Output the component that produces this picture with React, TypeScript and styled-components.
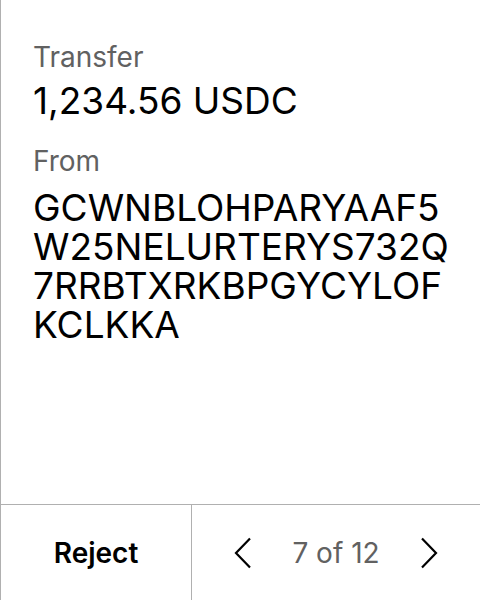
import React from "react";
import styled, { createGlobalStyle } from "styled-components";

const Global = createGlobalStyle`
  html, body { margin: 0; padding: 0; background: #fff; }
  body { font-family: Inter, "Noto Sans", sans-serif; }
  * { box-sizing: border-box; }
`;

const Screen = styled.div`
  width: 480px;
  height: 600px;
  display: flex;
  flex-direction: column;
  border-left: 1px solid #b0b0b0;
  background: #fff;
`;

const Content = styled.div`
  flex: 1;
  padding: 40px 0 0 32px;
  display: flex;
  flex-direction: column;
`;

const Label = styled.div<{ $top?: number }>`
  font-size: 28px;
  line-height: 34px;
  color: #616161;
  margin-top: ${(p) => p.$top ?? 0}px;
`;

const Amount = styled.div`
  font-size: 37px;
  line-height: 44px;
  color: #000;
  margin-top: 5px;
`;

const Address = styled.div`
  font-size: 37px;
  line-height: 39px;
  color: #000;
  margin-top: 10px;
  width: 440px;
  word-break: break-all;
`;

const Footer = styled.div`
  height: 96px;
  border-top: 1px solid #b0b0b0;
  display: flex;
`;

const RejectButton = styled.button`
  width: 191px;
  border: none;
  border-right: 1px solid #b0b0b0;
  background: transparent;
  font-family: Inter, sans-serif;
  font-weight: 600;
  font-size: 28px;
  color: #000;
  padding: 0;
`;

const Pager = styled.div`
  flex: 1;
  display: flex;
  align-items: center;
  justify-content: center;
  gap: 40px;
`;

const Count = styled.span`
  font-size: 28px;
  color: #616161;
`;

const Chevron = ({ dir }: { dir: "left" | "right" }) => (
  <svg width="18" height="32" viewBox="0 0 18 32" fill="none">
    <path
      d={dir === "left" ? "M16 1.5 L2 16 L16 30.5" : "M2 1.5 L16 16 L2 30.5"}
      stroke="#000"
      strokeWidth="2.2"
    />
  </svg>
);

export default function App() {
  return (
    <>
      <Global />
      <Screen>
        <Content>
          <Label>Transfer</Label>
          <Amount>1,234.56 USDC</Amount>
          <Label $top={21}>From</Label>
          <Address>
            GCWNBLOHPARYAAF5
            <br />
            W25NELURTERYS732Q
            <br />
            7RRBTXRKBPGYCYLOF
            <br />
            KCLKKA
          </Address>
        </Content>
        <Footer>
          <RejectButton>Reject</RejectButton>
          <Pager>
            <Chevron dir="left" />
            <Count>7 of 12</Count>
            <Chevron dir="right" />
          </Pager>
        </Footer>
      </Screen>
    </>
  );
}
